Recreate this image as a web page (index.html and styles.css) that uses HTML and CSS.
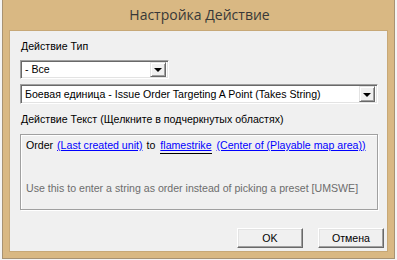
FILE: index.html
```html
<!DOCTYPE html>
<html lang="ru">
<head>
  <meta charset="UTF-8" />
  <title>Настройка Действие</title>
  <link rel="stylesheet" href="styles.css">
</head>
<body>
  <div class="window">
    <div class="titlebar">Настройка Действие</div>
    <div class="client">
      <div class="label first">Действие Тип</div>
      <div class="combo short">
        <span class="combo-text">- Все</span>
        <span class="drop-btn"><span class="arrow"></span></span>
      </div>
      <div class="combo long">
        <span class="combo-text">Боевая единица - Issue Order Targeting A Point (Takes String)</span>
        <span class="drop-btn"><span class="arrow"></span></span>
      </div>
      <div class="label second">Действие Текст (Щелкните в подчеркнутых областях)</div>
      <div class="group">
        <div class="order-line">
          <span>Order</span>
          <a class="link">(Last created unit)</a>
          <span>to</span>
          <a class="link selected">flamestrike</a>
          <a class="link">(Center of (Playable map area))</a>
        </div>
        <div class="hint">Use this to enter a string as order instead of picking a preset [UMSWE]</div>
      </div>
      <div class="buttons">
        <button class="btn">OK</button>
        <button class="btn">Отмена</button>
      </div>
    </div>
  </div>
</body>
</html>
```

FILE: styles.css
```css
* {
  box-sizing: border-box;
}
body {
  margin: 0;
  background: #f4f4f4;
  font-family: 'Liberation Sans', Arial, sans-serif;
  font-size: 10.6px;
  color: #000;
}
.window {
  margin-left: 2px;
  width: 393px;
  height: 259px;
  background: #d9b883;
  border: 1px solid #a89272;
  border-top: none;
  padding: 0 6px 6px 6px;
  display: flex;
  flex-direction: column;
}
.titlebar {
  height: 30px;
  line-height: 30px;
  text-align: center;
  font-family: 'Open Sans', 'Noto Sans', sans-serif;
  font-size: 14px;
  color: #383838;
  padding-left: 2px;
}
.client {
  flex: 1;
  background: #f0f0f0;
  border: 1px solid #c7a877;
  padding: 0 0 0 10px;
  display: flex;
  flex-direction: column;
}
.label {
  height: 13px;
  line-height: 13px;
  padding-left: 1px;
}
.label.first {
  margin-top: 9px;
}
.label.second {
  margin-top: 9px;
}
.combo {
  position: relative;
  background: #fff;
  border: 1px solid;
  border-color: #a0a0a0 #fff #fff #a0a0a0;
  box-shadow: inset 1px 1px 0 #696969, inset -1px -1px 0 #e3e3e3;
  display: flex;
  align-items: center;
  justify-content: space-between;
  padding: 0 2px 0 4px;
}
.combo.short {
  margin-top: 7px;
  width: 149px;
  height: 19px;
}
.combo.long {
  margin-top: 5px;
  width: 358px;
  height: 20px;
}
.combo-text {
  line-height: 13px;
  white-space: nowrap;
}
.drop-btn {
  width: 16px;
  height: 15px;
  background: #f0f0f0;
  border: 1px solid;
  border-color: #e3e3e3 #696969 #696969 #e3e3e3;
  box-shadow: inset 1px 1px 0 #fff, inset -1px -1px 0 #a0a0a0;
  display: flex;
  align-items: center;
  justify-content: center;
}
.combo.long .drop-btn {
  height: 16px;
}
.arrow {
  width: 0;
  height: 0;
  border-left: 4px solid transparent;
  border-right: 4px solid transparent;
  border-top: 4px solid #000;
  margin-top: 1px;
}
.group {
  margin-top: 8px;
  width: 358px;
  height: 76px;
  border: 1px solid #a0a0a0;
  box-shadow: 1px 1px 0 #fff, inset 1px 1px 0 #fff;
  padding: 4px 0 0 5px;
}
.order-line {
  display: flex;
  gap: 4px;
  line-height: 13px;
  white-space: nowrap;
}
.link {
  color: #0000ff;
  text-decoration: underline;
}
.link.selected {
  padding-bottom: 1px;
  border-bottom: 1px solid #000;
  margin: 0 1px 0 1px;
}
.hint {
  margin-top: 28px;
  line-height: 13px;
  color: #6d6d6d;
  white-space: nowrap;
}
.buttons {
  margin-top: 18px;
  display: flex;
  justify-content: flex-end;
  gap: 15px;
  padding-right: 3px;
}
.btn {
  width: 66px;
  height: 20px;
  padding: 0;
  background: #f0f0f0;
  font-family: 'Liberation Sans', Arial, sans-serif;
  font-size: 10.6px;
  color: #000;
  border: 1px solid;
  border-color: #fff #696969 #696969 #fff;
  box-shadow: inset -1px -1px 0 #a0a0a0, inset 1px 1px 0 #e3e3e3;
}
```
